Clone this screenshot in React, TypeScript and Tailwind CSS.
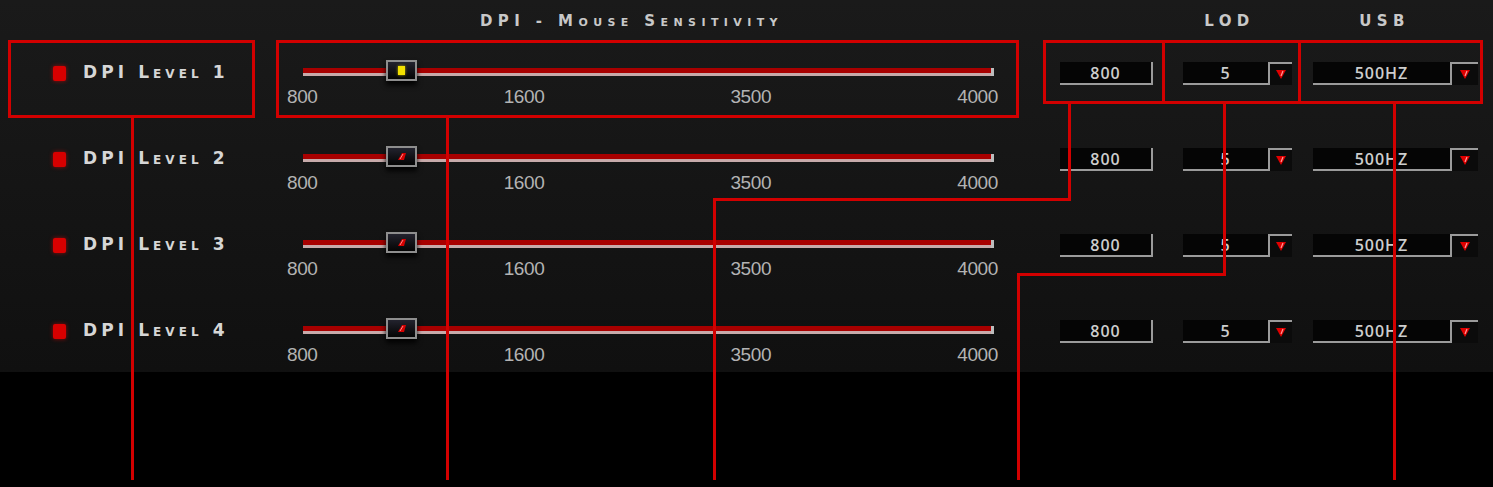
import React from "react";

const LEVELS = [1, 2, 3, 4];
const TICKS = ["800", "1600", "3500", "4000"];

function Led() {
  return (
    <span className="mr-[17px] block h-[15px] w-[13px] rounded-[2px] bg-[#d80000] shadow-[0_0_4px_rgba(255,0,0,0.55)]" />
  );
}

function ThumbMark({ active }: { active: boolean }) {
  if (active) {
    return <span className="block h-[9px] w-[7px] bg-[#f2e000] shadow-[0_0_3px_rgba(255,240,0,0.7)]" />;
  }
  return (
    <svg width="10" height="9" viewBox="0 0 10 9">
      <polygon points="5,1 9,1 7,8 1,8" fill="#d40000" />
      <polyline points="3,7 6,2" stroke="#ff8a8a" strokeWidth="1" fill="none" />
    </svg>
  );
}

function Slider({ active }: { active: boolean }) {
  return (
    <div className="flex w-[741px] flex-col">
      <div className="pl-[26px] pt-[25px]">
        <div className="relative h-[9px] w-[691px]">
          <div className="h-[5px] bg-[#a80000]" />
          <div className="h-[3px] bg-[#c7aaaa]" />
          <div className="absolute right-0 top-0 h-[8px] w-[3px] bg-[#bdbdbd]" />
          <div className="absolute left-[83px] top-[-8px] flex h-[21px] w-[31px] items-center justify-center border-2 border-[#8e8e8e] bg-linear-to-b from-[#23232e] to-[#050505] shadow-[0_4px_5px_rgba(0,0,0,0.9)]">
            <ThumbMark active={active} />
          </div>
        </div>
      </div>
      <div className="ml-[10px] mt-[10px] flex w-[711px] justify-between font-['Liberation_Sans',Arial,sans-serif] text-[19px] leading-[20px] tracking-[-0.02em] text-[#b3b3b3]">
        {TICKS.map((t) => (
          <span key={t}>{t}</span>
        ))}
      </div>
    </div>
  );
}

function DropButton({ width }: { width: string }) {
  return (
    <div className={`flex h-[23px] ${width} items-center justify-center border-l-2 border-t-2 border-[#9b9b9b] bg-[#0b0b0b]`}>
      <svg width="12" height="11" viewBox="0 0 12 11">
        <polygon points="1,1 11,1 6,10" fill="#e00000" />
        <line x1="8" y1="2" x2="6" y2="7" stroke="#ff9a9a" strokeWidth="1.2" />
      </svg>
    </div>
  );
}

const valueText =
  "font-['Open_Sans',Arial,sans-serif] text-[16px] font-semibold tracking-[0.06em] text-[#cdcdcd]";

function ValueField({ value, width }: { value: string; width: string }) {
  return (
    <div className={`flex h-[23px] ${width} items-center justify-center border-b-2 border-[#9b9b9b] bg-[#050505] ${valueText}`}>
      {value}
    </div>
  );
}

function Row({ level }: { level: number }) {
  return (
    <div className="flex h-[86px] items-start">
      <div className="flex h-[60px] w-[277px] items-center pl-[53px]">
        <Led />
        <span className="font-['DejaVu_Sans',sans-serif] text-[17px] font-bold tracking-[0.24em] text-[#d6d6d6] [font-variant-caps:small-caps]">
          DPI Level {level}
        </span>
      </div>
      <Slider active={level === 1} />
      <div className={`ml-[42px] mt-[19px] flex h-[23px] w-[93px] items-center justify-center border-b-2 border-r-2 border-[#9b9b9b] bg-[#050505] ${valueText}`}>
        800
      </div>
      <div className="ml-[30px] mt-[19px] flex">
        <ValueField value="5" width="w-[85px]" />
        <DropButton width="w-[24px]" />
      </div>
      <div className="ml-[21px] mt-[19px] flex">
        <ValueField value="500HZ" width="w-[137px]" />
        <DropButton width="w-[28px]" />
      </div>
    </div>
  );
}

function Annotations() {
  const red = "absolute bg-[#d20000]";
  const box = "absolute border-[3px] border-[#d20000]";
  return (
    <div className="pointer-events-none absolute inset-0">
      <div className={`${box} left-[8px] top-[40px] h-[78px] w-[247px]`} />
      <div className={`${box} left-[276px] top-[40px] h-[78px] w-[743px]`} />
      <div className={`${box} left-[1043px] top-[40px] h-[64px] w-[122px]`} />
      <div className={`${box} left-[1162px] top-[40px] h-[64px] w-[139px]`} />
      <div className={`${box} left-[1298px] top-[40px] h-[64px] w-[185px]`} />

      <div className={`${red} left-[131px] top-[118px] h-[362px] w-[3px]`} />
      <div className={`${red} left-[446px] top-[118px] h-[362px] w-[3px]`} />

      <div className={`${red} left-[1068px] top-[104px] h-[97px] w-[3px]`} />
      <div className={`${red} left-[713px] top-[198px] h-[3px] w-[358px]`} />
      <div className={`${red} left-[713px] top-[198px] h-[282px] w-[3px]`} />

      <div className={`${red} left-[1223px] top-[104px] h-[172px] w-[3px]`} />
      <div className={`${red} left-[1017px] top-[273px] h-[3px] w-[209px]`} />
      <div className={`${red} left-[1017px] top-[273px] h-[207px] w-[3px]`} />

      <div className={`${red} left-[1393px] top-[104px] h-[376px] w-[3px]`} />
    </div>
  );
}

export default function App() {
  return (
    <div className="relative h-[487px] w-[1493px] overflow-hidden bg-black">
      <div className="h-[372px] bg-linear-to-b from-[#1a1a1a] via-[#151515] to-[#101010]">
        <div className="flex h-[43px] items-center font-['DejaVu_Sans',sans-serif] text-[15px] font-bold tracking-[0.36em] text-[#c8c8c8] [font-variant-caps:small-caps]">
          <div className="w-[1164px] pl-[480px]">DPI - Mouse Sensitivity</div>
          <div className="w-[126px] pl-[5px] text-center">LOD</div>
          <div className="ml-[17px] w-[150px] pl-[5px] text-center">USB</div>
        </div>
        {LEVELS.map((l) => (
          <Row key={l} level={l} />
        ))}
      </div>
      <Annotations />
    </div>
  );
}
